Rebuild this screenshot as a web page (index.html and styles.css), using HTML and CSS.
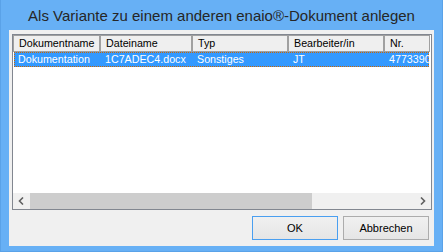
FILE: index.html
```html
<!DOCTYPE html>
<html lang="de">
<head>
    <meta charset="UTF-8">
    <title>Als Variante anlegen</title>
    <link rel="stylesheet" href="styles.css">
</head>
<body>
    <div class="window">
        <div class="titlebar">Als Variante zu einem anderen enaio®-Dokument anlegen</div>
        <div class="client">
            <div class="listview">
                <div class="header">
                    <div class="col c1">Dokumentname</div>
                    <div class="col c2">Dateiname</div>
                    <div class="col c3">Typ</div>
                    <div class="col c4">Bearbeiter/in</div>
                    <div class="col c5">Nr.</div>
                </div>
                <div class="rows">
                    <div class="row selected">
                        <div class="cell c1">Dokumentation</div>
                        <div class="cell c2">1C7ADEC4.docx</div>
                        <div class="cell c3">Sonstiges</div>
                        <div class="cell c4">JT</div>
                        <div class="cell c5">4773390</div>
                    </div>
                </div>
                <div class="hscroll">
                    <div class="arrow">
                        <svg width="7" height="8" viewBox="0 0 7 8"><path d="M5 0.5 L1.5 4 L5 7.5" fill="none" stroke="#606060" stroke-width="1.6"/></svg>
                    </div>
                    <div class="track">
                        <div class="thumb"></div>
                    </div>
                    <div class="arrow">
                        <svg width="7" height="8" viewBox="0 0 7 8"><path d="M2 0.5 L5.5 4 L2 7.5" fill="none" stroke="#606060" stroke-width="1.6"/></svg>
                    </div>
                </div>
            </div>
            <div class="buttons">
                <button class="btn default">OK</button>
                <button class="btn">Abbrechen</button>
            </div>
        </div>
    </div>
</body>
</html>
```

FILE: styles.css
```css
html, body {
    margin: 0;
    padding: 0;
}

body {
    width: 443px;
    height: 252px;
    overflow: hidden;
    font-family: "Liberation Sans", Arial, sans-serif;
}

.window {
    box-sizing: border-box;
    width: 443px;
    height: 252px;
    display: flex;
    flex-direction: column;
    padding: 0 8px 9px 8px;
    background-color: #67b0f5;
    border: 1px solid #5aa2e8;
    border-top: none;
}

.titlebar {
    height: 30px;
    line-height: 31px;
    text-align: center;
    font-size: 15px;
    color: #262626;
    white-space: nowrap;
    margin: 0 -7px;
}

.client {
    flex: 1;
    display: flex;
    flex-direction: column;
    padding: 4px 2px 6px 3px;
    background-color: #f0f0f0;
}

.listview {
    height: 174px;
    display: flex;
    flex-direction: column;
    border: 1px solid #828790;
    background-color: #ffffff;
    font-size: 10.7px;
    overflow: hidden;
}

.header {
    display: flex;
    height: 17px;
    flex: none;
}

.col {
    box-sizing: border-box;
    flex: none;
    height: 17px;
    line-height: 15px;
    padding-left: 5px;
    border: 1px solid #a0a0a0;
    background-color: #efefef;
    color: #000000;
    white-space: nowrap;
    overflow: hidden;
}

.c1 { width: 87px; }
.c2 { width: 92px; }
.c3 { width: 96px; }
.c4 { width: 96px; }
.c5 { width: 46px; }

.rows {
    flex: 1;
}

.row {
    display: flex;
    height: 15px;
    margin-left: 1px;
    width: 415px;
    box-sizing: border-box;
}

.row .cell {
    box-sizing: border-box;
    flex: none;
    line-height: 15px;
    padding-left: 5px;
    white-space: nowrap;
    overflow: hidden;
}

.row .c1 { width: 86px; padding-left: 4px; }
.row .c5 { width: 45px; }

.row.selected {
    color: #ffffff;
    background:
        repeating-linear-gradient(90deg, #cc6600 0 1px, transparent 1px 2px) top / 100% 1px no-repeat,
        repeating-linear-gradient(90deg, #cc6600 0 1px, transparent 1px 2px) bottom / 100% 1px no-repeat,
        repeating-linear-gradient(180deg, #cc6600 0 1px, transparent 1px 2px) left / 1px 100% no-repeat,
        repeating-linear-gradient(180deg, #cc6600 0 1px, transparent 1px 2px) right / 1px 100% no-repeat,
        #3399ff;
}

.hscroll {
    flex: none;
    display: flex;
    height: 16px;
    background-color: #f0f0f0;
}

.arrow {
    width: 17px;
    display: flex;
    align-items: center;
    justify-content: center;
}

.track {
    flex: 1;
    display: flex;
}

.thumb {
    width: 282px;
    background-color: #cdcdcd;
}

.buttons {
    display: flex;
    justify-content: flex-end;
    gap: 5px;
    margin-top: 6px;
    padding-right: 3px;
}

.btn {
    box-sizing: border-box;
    width: 86px;
    height: 24px;
    padding: 0;
    border: 1px solid #acacac;
    background: linear-gradient(#f0f0f0, #e5e5e5);
    font-family: "Liberation Sans", Arial, sans-serif;
    font-size: 11px;
    color: #000000;
}

.btn.default {
    border-color: #4a9ff0;
}
```
